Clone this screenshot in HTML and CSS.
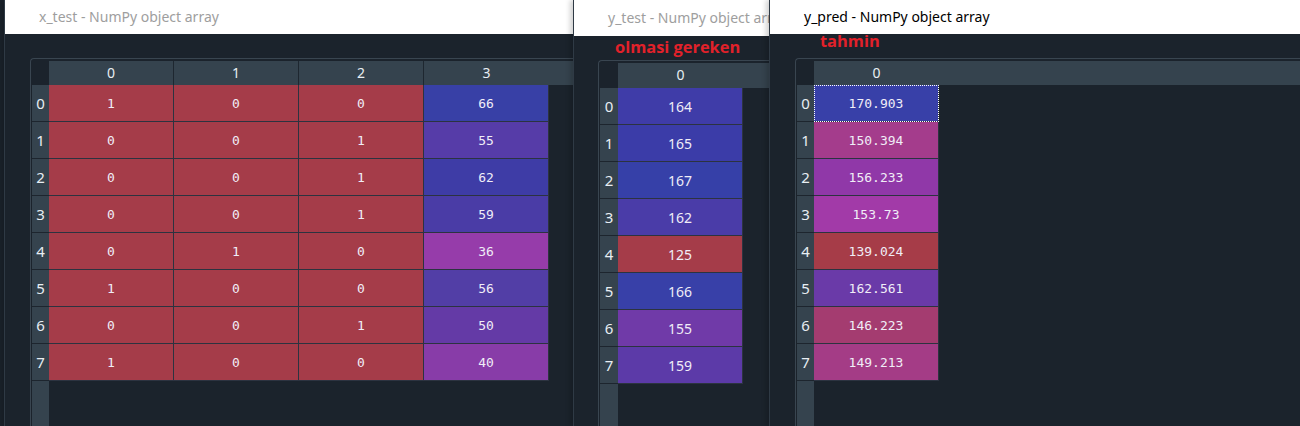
FILE: index.html
```html
<!DOCTYPE html>
<html>
<head>
<meta charset="utf-8">
<link rel="stylesheet" href="styles.css">
</head>
<body>
<div class="desk">
  <section class="win w1">
    <div class="title">x_test - NumPy object array</div>
    <div class="body">
      <div class="grid">
        <div class="idx">
          <div class="corner"></div>
          <div class="ih">0</div><div class="ih">1</div><div class="ih">2</div><div class="ih">3</div>
          <div class="ih">4</div><div class="ih">5</div><div class="ih">6</div><div class="ih">7</div>
        </div>
        <div class="data">
          <div class="hdr"><div class="hc">0</div><div class="hc">1</div><div class="hc">2</div><div class="hc">3</div></div>
          <div class="row mono"><div class="c r">1</div><div class="c r">0</div><div class="c r">0</div><div class="c" style="background:#3840a6">66</div></div>
          <div class="row mono"><div class="c r">0</div><div class="c r">0</div><div class="c r">1</div><div class="c" style="background:#563ca8">55</div></div>
          <div class="row mono"><div class="c r">0</div><div class="c r">0</div><div class="c r">1</div><div class="c" style="background:#3e3ca6">62</div></div>
          <div class="row mono"><div class="c r">0</div><div class="c r">0</div><div class="c r">1</div><div class="c" style="background:#4a3ca6">59</div></div>
          <div class="row mono"><div class="c r">0</div><div class="c r">1</div><div class="c r">0</div><div class="c" style="background:#963caa">36</div></div>
          <div class="row mono"><div class="c r">1</div><div class="c r">0</div><div class="c r">0</div><div class="c" style="background:#523ea6">56</div></div>
          <div class="row mono"><div class="c r">0</div><div class="c r">0</div><div class="c r">1</div><div class="c" style="background:#643aa6">50</div></div>
          <div class="row mono"><div class="c r">1</div><div class="c r">0</div><div class="c r">0</div><div class="c" style="background:#883ca8">40</div></div>
        </div>
      </div>
    </div>
  </section>

  <section class="win w2">
    <div class="title">y_test - NumPy object array</div>
    <div class="body">
      <div class="note note2">olmasi gereken</div>
      <div class="grid">
        <div class="idx">
          <div class="corner"></div>
          <div class="ih">0</div><div class="ih">1</div><div class="ih">2</div><div class="ih">3</div>
          <div class="ih">4</div><div class="ih">5</div><div class="ih">6</div><div class="ih">7</div>
        </div>
        <div class="data">
          <div class="hdr"><div class="hc">0</div></div>
          <div class="row sans"><div class="c" style="background:#3f3ca8">164</div></div>
          <div class="row sans"><div class="c" style="background:#3b3ca8">165</div></div>
          <div class="row sans"><div class="c" style="background:#3640a8">167</div></div>
          <div class="row sans"><div class="c" style="background:#4a3ca8">162</div></div>
          <div class="row sans"><div class="c r">125</div></div>
          <div class="row sans"><div class="c" style="background:#3840a8">166</div></div>
          <div class="row sans"><div class="c" style="background:#703aa8">155</div></div>
          <div class="row sans"><div class="c" style="background:#5c3aa8">159</div></div>
        </div>
      </div>
    </div>
  </section>

  <section class="win w3">
    <div class="title">y_pred - NumPy object array</div>
    <div class="body">
      <div class="note note3">tahmin</div>
      <div class="grid">
        <div class="idx">
          <div class="corner"></div>
          <div class="ih">0</div><div class="ih">1</div><div class="ih">2</div><div class="ih">3</div>
          <div class="ih">4</div><div class="ih">5</div><div class="ih">6</div><div class="ih">7</div>
        </div>
        <div class="data">
          <div class="hdr"><div class="hc">0</div></div>
          <div class="row mono"><div class="c focus" style="background:#3840a8">170.903</div></div>
          <div class="row mono"><div class="c" style="background:#a43c8c">150.394</div></div>
          <div class="row mono"><div class="c" style="background:#9038a8">156.233</div></div>
          <div class="row mono"><div class="c" style="background:#a23aa8">153.73</div></div>
          <div class="row mono"><div class="c" style="background:#a63c48">139.024</div></div>
          <div class="row mono"><div class="c" style="background:#6a3aa8">162.561</div></div>
          <div class="row mono"><div class="c" style="background:#a43c70">146.223</div></div>
          <div class="row mono"><div class="c" style="background:#a43c86">149.213</div></div>
        </div>
      </div>
    </div>
  </section>
</div>
</body>
</html>
```

FILE: styles.css
```css
html, body {
  margin: 0;
  padding: 0;
  background: #1b232c;
  overflow: hidden;
}

.desk {
  display: flex;
  height: 426px;
  padding-left: 4px;
  box-sizing: border-box;
}

.win {
  position: relative;
  flex: none;
  display: flex;
  flex-direction: column;
  background: #1b232c;
  border-left: 1px solid #2f3a45;
  overflow: hidden;
  box-shadow: -3px 0 5px rgba(0, 0, 0, 0.18);
}

.w1 { width: 568px; z-index: 1; }
.w2 { width: 195px; z-index: 2; }
.w3 { flex: 1; z-index: 3; }

.title {
  flex: none;
  height: 34px;
  line-height: 34px;
  padding-left: 34px;
  background: #ffffff;
  color: #9e9e9e;
  font-family: "Noto Sans", sans-serif;
  font-size: 14px;
  white-space: nowrap;
}

.w2 .title {
  height: 36px;
  line-height: 35px;
}

.w3 .title {
  color: #000000;
}

.body {
  position: relative;
  flex: 1;
  padding: 24px 0 0 25px;
  min-height: 0;
}

.w2 .body { padding-left: 24px; }

.grid {
  display: flex;
  height: 100%;
  box-sizing: border-box;
  border-top: 1px solid #394550;
  border-left: 1px solid #394550;
  border-top-left-radius: 4px;
  padding: 2px 0 0 1px;
}

.idx {
  flex: none;
  width: 17px;
  background: #35434e;
}

.w2 .idx { width: 18px; }

.corner {
  height: 24px;
  background: #1b232c;
}

.w2 .corner { height: 25px; }

.ih {
  height: 36px;
  border-bottom: 1px solid #1d252e;
  display: flex;
  align-items: center;
  justify-content: center;
  color: #e8eef3;
  font-family: "Noto Sans", sans-serif;
  font-size: 15px;
}

.data {
  flex: 1;
  min-width: 0;
}

.hdr {
  display: flex;
  height: 24px;
  background: #35434e;
}

.w2 .hdr { height: 25px; }

.hc {
  flex: none;
  width: 124px;
  border-right: 1px solid #1e2730;
  text-align: center;
  line-height: 24px;
  color: #e8eef3;
  font-family: "Noto Sans", sans-serif;
  font-size: 14px;
}

.hc:last-child {
  border-right: none;
  width: 125px;
}

.row {
  display: flex;
}

.c {
  flex: none;
  width: 124px;
  height: 36px;
  border-right: 1px solid #2c3340;
  border-bottom: 1px solid #2c3340;
  display: flex;
  align-items: center;
  justify-content: center;
  color: #f0edf7;
}

.r { background: #a53c49; }

.mono .c {
  font-family: "DejaVu Sans Mono", monospace;
  font-size: 13px;
}

.sans .c {
  font-family: "Noto Sans", sans-serif;
  font-size: 14px;
}

.focus {
  outline: 1px dotted #ffffff;
  outline-offset: -1px;
}

.note {
  position: absolute;
  color: #e2212a;
  font-family: "Open Sans", sans-serif;
  font-weight: bold;
  font-size: 16.4px;
  line-height: 20px;
  white-space: nowrap;
}

.note2 { left: 41px; top: 1px; }
.note3 { left: 50px; top: -3px; }
```
